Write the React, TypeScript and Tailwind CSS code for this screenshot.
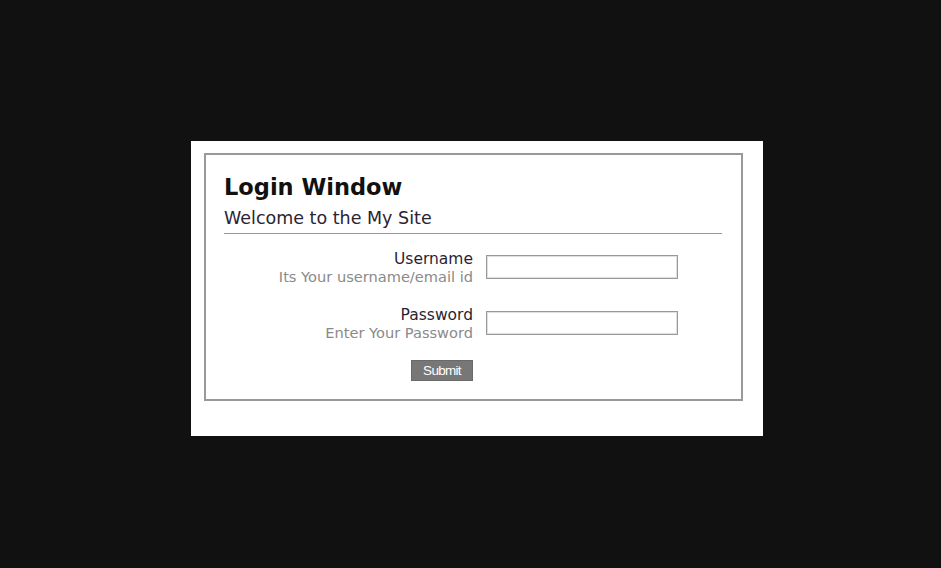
import React from 'react';

const fields = [
  { label: 'Username', hint: 'Its Your username/email id', type: 'text' },
  { label: 'Password', hint: 'Enter Your Password', type: 'password' },
];

const App: React.FC = () => {
  return (
    <div className="min-h-[568px] w-full bg-[#111111] pt-[141px] pl-[191px]" style={{ fontFamily: '"DejaVu Sans", Verdana, sans-serif' }}>
      <div className="w-[572px] h-[295px] bg-white pt-[12px] pl-[13px]">
        <div className="w-[539px] h-[248px] border-2 border-[#999999] pt-[18px] px-[18px]">
          {/* Header */}
          <h1 className="text-[22.5px] font-bold leading-[28px] text-[#111111]">Login Window</h1>
          <p className="text-[17.5px] leading-[22px] text-[#2a2433] mt-[6px]">Welcome to the My Site</p>
          <div className="h-px bg-[#999999] mt-[4px] mr-[1px]" />

          {/* Fields */}
          <div className="mt-[16px] flex flex-col gap-[20px]">
            {fields.map((f) => (
              <div key={f.label} className="flex items-start">
                <div className="w-[249px] text-right">
                  <div className="text-[15.5px] leading-[18px] text-[#2a1f35]">{f.label}</div>
                  <div className="text-[14.6px] leading-[18px] text-[#8a8a8a]">{f.hint}</div>
                </div>
                <input
                  type={f.type}
                  className="ml-[13px] mt-[5px] w-[192px] h-[24px] border border-[#999999] bg-white shadow-[inset_0_0_0_1px_#e0e0e0] outline-none"
                />
              </div>
            ))}
          </div>

          {/* Submit */}
          <div className="w-[249px] flex justify-end mt-[18px]">
            <button
              className="w-[62px] h-[21px] bg-[#777777] text-white text-[13.5px] tracking-[-0.7px] border border-[#6a6a6a]"
              style={{ fontFamily: '"Liberation Sans", Arial, sans-serif' }}
            >
              Submit
            </button>
          </div>
        </div>
      </div>
    </div>
  );
};

export default App;
